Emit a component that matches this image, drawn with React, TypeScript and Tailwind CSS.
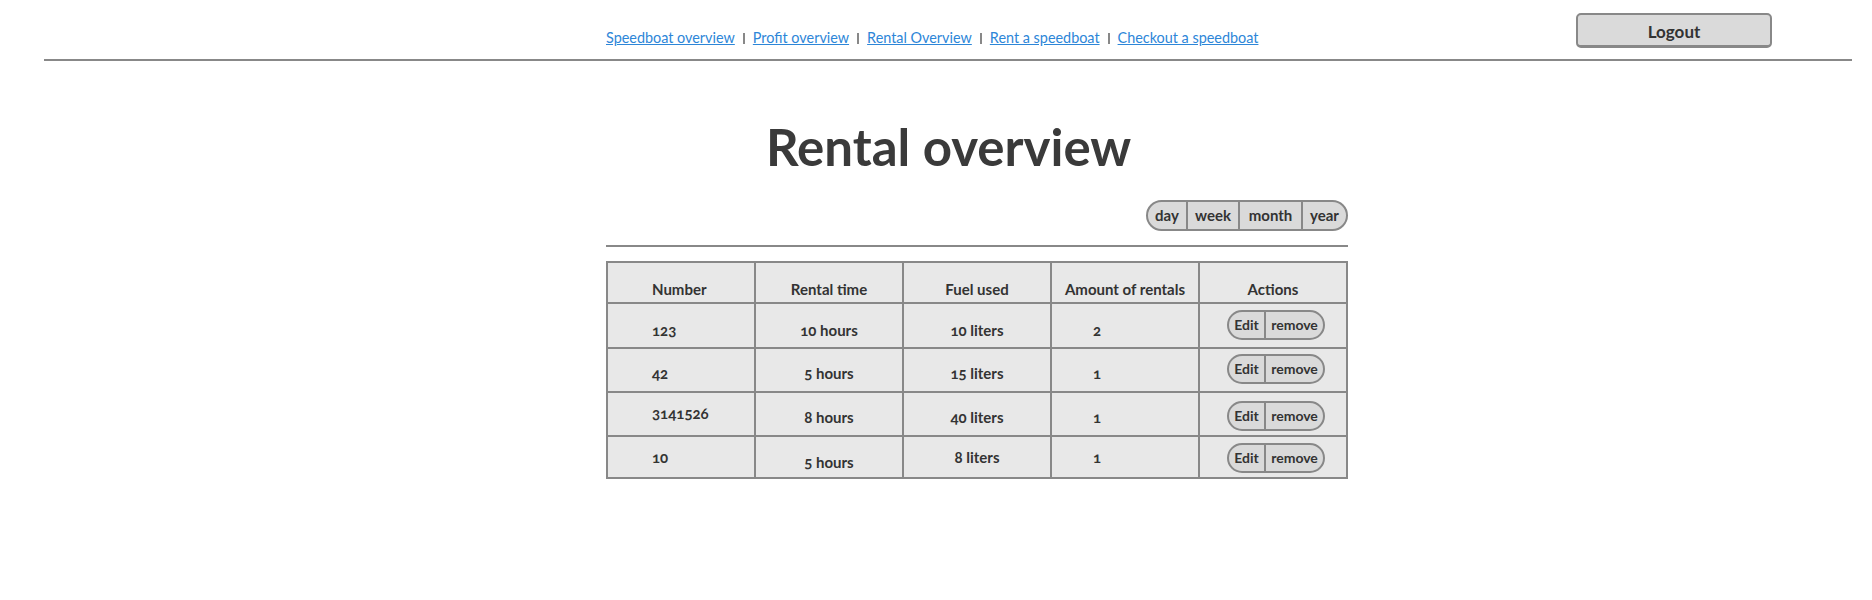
import React from "react";

const links = [
  "Speedboat overview",
  "Profit overview",
  "Rental Overview",
  "Rent a speedboat",
  "Checkout a speedboat",
];

const periods = [
  { label: "day", w: "w-[38px]" },
  { label: "week", w: "w-[52px]" },
  { label: "month", w: "w-[63px]" },
  { label: "year", w: "w-[45px]" },
];

type Cell = { text: string; pt: string };

const rows: { h: string; btn: string; cells: Cell[] }[] = [
  {
    h: "h-[43px]",
    btn: "pt-[6px]",
    cells: [
      { text: "123", pt: "pt-[16px]" },
      { text: "10 hours", pt: "pt-[16px]" },
      { text: "10 liters", pt: "pt-[16px]" },
      { text: "2", pt: "pt-[16px]" },
    ],
  },
  {
    h: "h-[42px]",
    btn: "pt-[5px]",
    cells: [
      { text: "42", pt: "pt-[14px]" },
      { text: "5 hours", pt: "pt-[14px]" },
      { text: "15 liters", pt: "pt-[14px]" },
      { text: "1", pt: "pt-[14px]" },
    ],
  },
  {
    h: "h-[42px]",
    btn: "pt-[8px]",
    cells: [
      { text: "3141526", pt: "pt-[10px]" },
      { text: "8 hours", pt: "pt-[14px]" },
      { text: "40 liters", pt: "pt-[14px]" },
      { text: "1", pt: "pt-[14px]" },
    ],
  },
  {
    h: "h-[40px]",
    btn: "pt-[6px]",
    cells: [
      { text: "10", pt: "pt-[10px]" },
      { text: "5 hours", pt: "pt-[15px]" },
      { text: "8 liters", pt: "pt-[10px]" },
      { text: "1", pt: "pt-[10px]" },
    ],
  },
];

function RowButtons() {
  return (
    <div className="flex h-[30px] overflow-hidden rounded-full border-2 border-[#888] bg-[#dadada] text-[14px] font-bold text-[#333]">
      <span className="flex w-[37px] items-center justify-center border-r-2 border-[#888]">
        Edit
      </span>
      <span className="flex w-[57px] items-center justify-center">remove</span>
    </div>
  );
}

export default function App() {
  return (
    <div className="min-h-[600px] bg-white font-['Lato',sans-serif] text-[#333]">
      <header className="ml-[44px] mr-[20px] flex h-[61px] border-b-2 border-[#888]">
        <nav className="flex items-end pb-[11px] pl-[562px] text-[14.4px] leading-[20px]">
          {links.map((l, i) => (
            <React.Fragment key={l}>
              {i > 0 && (
                <span className="mx-[8px] mb-[4px] h-[11px] w-[2px] bg-[#888]" />
              )}
              <a
                href="#"
                className="text-[#2d86d8] underline decoration-[#2d86d8] underline-offset-[1px]"
              >
                {l}
              </a>
            </React.Fragment>
          ))}
        </nav>
        <button className="ml-auto mr-[80px] mt-[13px] h-[35px] w-[196px] rounded-[5px] border-2 border-b-[3px] border-[#888] bg-[#dadada] pt-[3px] text-[17px] font-bold text-[#333]">
          Logout
        </button>
      </header>

      <main className="ml-[606px] w-[742px]">
        <h1 className="mt-[60px] pl-[160px] text-[51px] font-bold leading-none text-[#3a3a3a]">
          Rental overview
        </h1>

        <div className="mt-[28px] flex justify-end">
          <div className="flex h-[31px] overflow-hidden rounded-full border-2 border-[#888] bg-[#dadada] text-[15px] font-bold text-[#333]">
            {periods.map((p, i) => (
              <span
                key={p.label}
                className={`flex items-center justify-center ${p.w} ${
                  i > 0 ? "border-l-2 border-[#888]" : ""
                }`}
              >
                {p.label}
              </span>
            ))}
          </div>
        </div>

        <div className="mt-[14px] h-[2px] bg-[#888]" />

        <div className="mt-[14px] grid grid-cols-5 gap-[2px] border-2 border-[#888] bg-[#888] text-[15px] font-bold leading-[20px] text-[#333] oldstyle-nums">
          <div className="h-[39px] bg-[#e8e8e8] pl-[44px] pt-[16px]">Number</div>
          <div className="h-[39px] bg-[#e8e8e8] pt-[16px] text-center">Rental time</div>
          <div className="h-[39px] bg-[#e8e8e8] pt-[16px] text-center">Fuel used</div>
          <div className="h-[39px] bg-[#e8e8e8] pt-[16px] text-center">Amount of rentals</div>
          <div className="h-[39px] bg-[#e8e8e8] pt-[16px] text-center">Actions</div>

          {rows.map((r, ri) => (
            <React.Fragment key={ri}>
              <div className={`${r.h} bg-[#e8e8e8] pl-[44px] ${r.cells[0].pt}`}>
                {r.cells[0].text}
              </div>
              <div className={`${r.h} bg-[#e8e8e8] text-center ${r.cells[1].pt}`}>
                {r.cells[1].text}
              </div>
              <div className={`${r.h} bg-[#e8e8e8] text-center ${r.cells[2].pt}`}>
                {r.cells[2].text}
              </div>
              <div className={`${r.h} bg-[#e8e8e8] pl-[41px] ${r.cells[3].pt}`}>
                {r.cells[3].text}
              </div>
              <div className={`${r.h} flex justify-center bg-[#e8e8e8] pl-[6px] ${r.btn}`}>
                <RowButtons />
              </div>
            </React.Fragment>
          ))}
        </div>
      </main>
    </div>
  );
}
